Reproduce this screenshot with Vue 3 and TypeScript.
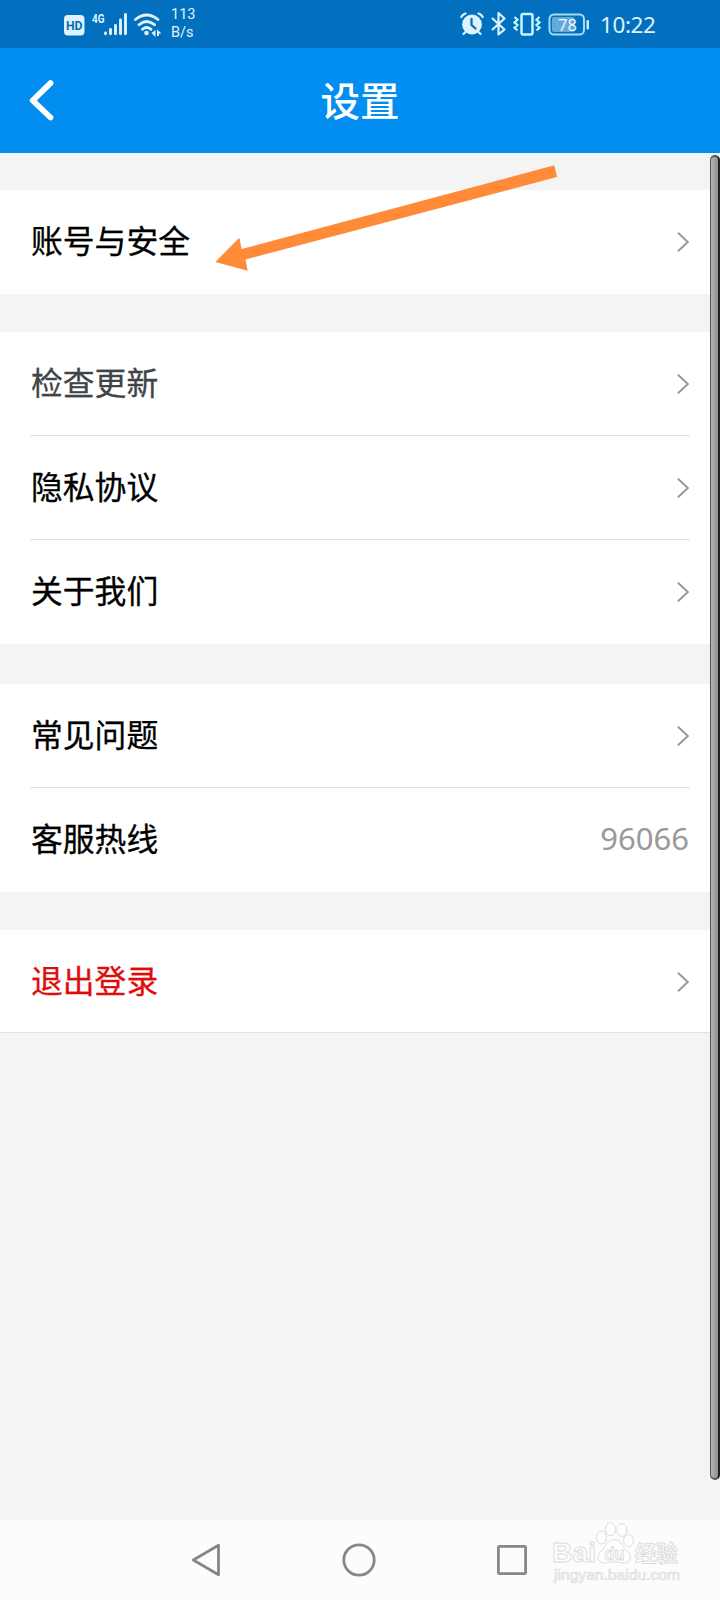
<script setup lang="ts">
interface Row {
  label: string
  tone?: 'soft' | 'danger'
  value?: string
}

const groups: Row[][] = [
  [{ label: '账号与安全' }],
  [{ label: '检查更新', tone: 'soft' }, { label: '隐私协议' }, { label: '关于我们' }],
  [{ label: '常见问题' }, { label: '客服热线', value: '96066' }],
  [{ label: '退出登录', tone: 'danger' }],
]
</script>

<template>
  <div class="screen">
    <div class="status">
      <div class="status-left">
        <svg width="70" height="36" viewBox="0 0 70 36">
          <rect x="0" y="6" width="20.500" height="20.500" rx="4" fill="#dff3fc" />
          <text x="2" y="21" class="hd" textLength="16.500" lengthAdjust="spacingAndGlyphs">HD</text>
          <text x="28" y="13.500" class="gen" textLength="12.500" lengthAdjust="spacingAndGlyphs">4G</text>
          <path
            d="M41.500 24v.8M46.500 20.500v4.300M51.500 16.500v8.300M56.500 11v13.800M61.500 5.500v19.300"
            fill="none" stroke="#dff3fc" stroke-width="2.900" stroke-linecap="round"
          />
        </svg>
        <svg class="wifi" width="30" height="26" viewBox="0 0 30 26">
          <path
            d="M2.500 6.500Q13.500-2.500 25 6.500M6 11.700Q13.500 5.200 21.500 11.700M9.500 16.300Q13.500 12.700 18 16.300"
            fill="none" stroke="#dff3fc" stroke-width="2.800" stroke-linecap="round"
          />
          <circle cx="13.500" cy="20" r="2.300" fill="#dff3fc" />
          <path d="M22.500 17v7L18.500 20zM24 16.500l4.500 4H26V23h-2z" fill="#dff3fc" />
        </svg>
        <div class="speed"><span>113</span><span>B/s</span></div>
      </div>
      <div class="status-right">
        <svg width="132" height="28" viewBox="0 0 132 28">
          <circle cx="12" cy="14.500" r="9.900" fill="#dff3fc" />
          <path d="M1.300 7Q2.500 4.500 5.500 3.500M22.700 7Q21.500 4.500 18.500 3.500M5.500 22l-2 2M18.500 22l2 2" stroke="#dff3fc" stroke-width="2.200" fill="none" stroke-linecap="round" />
          <path d="M11.500 9v6l4 3.500" stroke="#0270bf" stroke-width="2.300" fill="none" stroke-linecap="round" />
          <path d="M32 8l12.500 11.500-6 5V3l6 5.500L32 20" fill="none" stroke="#dff3fc" stroke-width="2.200" stroke-linejoin="round" />
          <rect x="61.500" y="4" width="11" height="20.500" rx="1.800" fill="none" stroke="#c4f6fb" stroke-width="2.500" />
          <path d="M54.500 7l3 2.700-3 2.700 3 2.700-3 2.700 3 2.700M79.500 7l-3 2.700 3 2.700-3 2.700 3 2.700-3 2.700" fill="none" stroke="#c4f6fb" stroke-width="2.200" />
          <rect x="89.500" y="4.500" width="34.500" height="20" rx="4.500" fill="none" stroke="#a5dcf6" stroke-width="2" />
          <rect x="92" y="7" width="22.500" height="15" rx="2" fill="#65a9dc" />
          <rect x="126.500" y="10" width="2.500" height="9.500" rx="1" fill="#c8edfb" />
          <text x="107.500" y="20.500" text-anchor="middle" class="battery">78</text>
        </svg>
        <span class="clock">10:22</span>
      </div>
    </div>

    <header class="header">
      <svg class="back" width="26" height="42" viewBox="0 0 26 42">
        <path d="M21.500 3.200L3.700 20.500l17.800 17" fill="none" stroke="#fff" stroke-width="5.800" stroke-linecap="round" stroke-linejoin="round" />
      </svg>
      <h1>设置</h1>
    </header>

    <main class="content">
      <section v-for="(group, i) in groups" :key="i" class="group">
        <div v-for="row in group" :key="row.label" class="row">
          <span class="label" :class="row.tone">{{ row.label }}</span>
          <span v-if="row.value" class="value">{{ row.value }}</span>
          <svg v-else width="14" height="22" viewBox="0 0 14 22">
            <path d="M2 1.800L11.800 11 2 20.200" fill="none" stroke="#999" stroke-width="2" />
          </svg>
        </div>
      </section>
      <div class="scrollbar"></div>
    </main>

    <nav class="nav">
      <svg width="30" height="36" viewBox="0 0 30 36">
        <path d="M27.500 3.200v29.600L2.300 18z" fill="none" stroke="#878787" stroke-width="2.800" stroke-linejoin="round" />
      </svg>
      <svg width="34" height="34" viewBox="0 0 34 34">
        <circle cx="17" cy="17" r="15.200" fill="none" stroke="#878787" stroke-width="2.800" />
      </svg>
      <svg width="30" height="30" viewBox="0 0 30 30">
        <rect x="1.400" y="1.400" width="27.200" height="27.200" rx="1.500" fill="none" stroke="#878787" stroke-width="2.800" />
      </svg>
    </nav>

    <svg class="arrow" width="346" height="110" viewBox="0 0 346 110">
      <path d="M1.300 97L25.300 72.700 27.700 84 340.300.3 343 12 31.500 94.500 33.700 105.700z" fill="#ff8b38" />
    </svg>

    <svg class="watermark" width="134" height="66" viewBox="0 0 134 66">
      <g fill="#fefefe" stroke="#dcdcdc" stroke-width="1">
        <text x="0" y="40" class="brand" textLength="44" lengthAdjust="spacingAndGlyphs">Bai</text>
        <ellipse cx="49.500" cy="15.500" rx="5" ry="6.500" />
        <ellipse cx="58.500" cy="7.200" rx="5" ry="6.500" />
        <ellipse cx="70" cy="8" rx="5" ry="6.500" />
        <ellipse cx="76.500" cy="18.500" rx="5" ry="6" />
        <path d="M62 17.500C55 17.500 54 25 49 29C43 35 47 42 54 41C60 39.500 65 39.500 71 41C79 42 81 34 75 29C70 24 69 17.500 62 17.500z" />
        <text x="52.500" y="38" class="du" textLength="20" lengthAdjust="spacingAndGlyphs">du</text>
        <text x="83" y="38.500" class="exp" textLength="43" lengthAdjust="spacingAndGlyphs">经验</text>
      </g>
      <text x="2" y="57.500" class="site" textLength="126" lengthAdjust="spacingAndGlyphs">jingyan.baidu.com</text>
    </svg>
  </div>
</template>

<style>
body {
  background: #f4f4f4;
}
</style>

<style scoped>
.screen {
  position: relative;
  display: flex;
  flex-direction: column;
  width: 720px;
  height: 1600px;
  overflow: hidden;
  background: #f4f4f4;
  font-family: "Noto Sans", "KaiTi", "Noto Sans CJK SC", sans-serif;
}

.status {
  display: flex;
  justify-content: space-between;
  height: 48px;
  flex: none;
  box-sizing: border-box;
  padding: 9px 62px 0 64px;
  background: #0270bf;
  color: #dff3fc;
}

.status-left,
.status-right {
  display: flex;
  align-items: flex-start;
}

.wifi {
  margin: 4px 0 0 -1px;
}

.hd {
  font: bold 13px "Roboto", sans-serif;
  fill: #0270bf;
}

.gen {
  font: bold 13px "Roboto", sans-serif;
  fill: #dff3fc;
}

.speed {
  display: flex;
  flex-direction: column;
  margin: -3px 0 0 8px;
  font: 14.5px/18px "Roboto", sans-serif;
}

.status-right svg {
  margin-top: 1px;
}

.battery {
  font: 16.5px "Open Sans", sans-serif;
  fill: #eefaff;
}

.clock {
  width: 58px;
  margin-left: 8px;
  font: 22.5px/31px "Noto Sans", sans-serif;
  letter-spacing: -0.4px;
  white-space: nowrap;
}

.header {
  display: grid;
  grid-template-columns: 90px 1fr 90px;
  align-items: center;
  height: 105px;
  flex: none;
  background: #028df0;
}

.back {
  margin-left: 29px;
}

h1 {
  margin: 0;
  color: #fff;
  font-size: 39.5px;
  line-height: 56px;
  font-weight: 500;
  text-align: center;
}

.content {
  position: relative;
  display: flex;
  flex-direction: column;
  gap: 38px;
  height: 1367px;
  flex: none;
  box-sizing: border-box;
  padding-top: 37px;
}

.group {
  background: #fff;
  padding: 0 30px;
}

.group:nth-child(3) {
  margin-top: 2px;
}

.group:nth-child(4) {
  border-bottom: 1px solid #e2e2e2;
}

.row {
  display: flex;
  align-items: center;
  justify-content: space-between;
  height: 104px;
  box-sizing: border-box;
}

.group:nth-child(4) .row {
  height: 102px;
  padding-top: 1px;
}

.row:not(:last-child) {
  border-bottom: 1px solid #e2e2e2;
}

.label {
  margin: 0 0 2px 1px;
  font-size: 31.8px;
  line-height: 44px;
  color: #000;
  -webkit-text-stroke: 0.3px currentColor;
}

.label.soft {
  color: #414447;
}

.label.danger {
  color: #df0c0c;
}

.value {
  margin: 0 1px 4px 0;
  color: #999;
  font: 31px/44px "Noto Sans", sans-serif;
}

.scrollbar {
  position: absolute;
  top: 2px;
  right: 0.5px;
  width: 10px;
  height: 1325px;
  box-sizing: border-box;
  border: 2px solid #555;
  border-left-width: 1px;
  border-right-color: #222;
  border-radius: 5px;
  background: linear-gradient(90deg, #b3b3b3, #8f8f8f);
}

.nav {
  display: flex;
  align-items: center;
  justify-content: space-between;
  height: 80px;
  flex: none;
  box-sizing: border-box;
  padding: 0 193px 0 191px;
  background: #fcfcfc;
}

.arrow {
  position: absolute;
  left: 214px;
  top: 165px;
}

.watermark {
  position: absolute;
  left: 552px;
  top: 1522px;
}

.brand {
  font: bold 28px "Liberation Sans", sans-serif;
}

.du {
  font: bold 19px "Liberation Sans", sans-serif;
}

.exp {
  font: bold 22px "Noto Sans CJK SC", sans-serif;
}

.site {
  font: 14px "Liberation Sans", sans-serif;
  fill: #fafafa;
  stroke: #dedede;
  stroke-width: 0.7px;
}
</style>
